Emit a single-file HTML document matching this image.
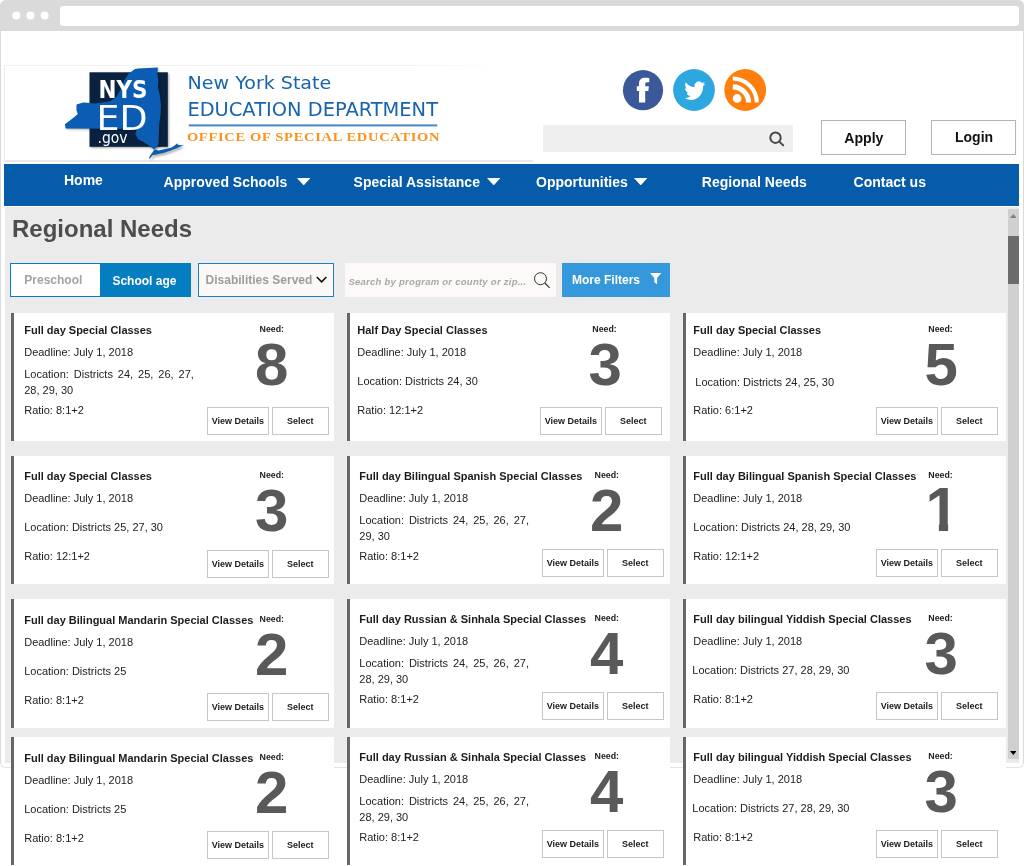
<!DOCTYPE html>
<html lang="en">
<head>
<meta charset="utf-8">
<title>Regional Needs - NYSED Office of Special Education</title>
<style>
html,body{margin:0;padding:0;background:#fff;}
body{width:1024px;height:866px;position:relative;overflow:hidden;font-family:"Liberation Sans",Arial,Helvetica,sans-serif;}
div,span,svg{position:absolute;white-space:nowrap;}
.wrap{left:0;top:0;width:1024px;height:866px;will-change:transform;}
.frame{left:0;top:0;width:1022px;height:766.5px;border:1px solid #dadada;border-bottom-color:#e2e2e2;border-top:0;border-radius:6px;background:#fff;}
.chrome{left:0;top:0;width:1024px;height:30.6px;background:#dadada;border-radius:6px 6px 0 0;}
.dot{width:8px;height:8px;border-radius:50%;background:#fff;top:11.4px;}
.url{left:59.5px;top:5.6px;width:959.3px;height:20.3px;background:#fff;border-radius:3px;}
.nav{left:4.1px;top:163.7px;width:1014.9px;height:42.1px;background:#065bab;}
.page{left:5px;top:207.2px;width:1014px;height:555.5px;background:#ebebeb;}
.card{background:#fff;border-left:3px solid #666;box-sizing:border-box;height:128px;}
.btn{border:1px solid #c6c6c6;box-sizing:border-box;background:#fff;height:28px;}
.hb{border:1px solid #b9b1b3;box-sizing:border-box;background:#fff;}
</style>
</head>
<body>
<div class="wrap">

<div class="frame"></div>
<div class="chrome"></div>
<svg style="left:0;top:0" width="60" height="31" viewBox="0 0 60 31"><circle cx="16.25" cy="15.4" r="4" fill="#fff"/><circle cx="30.4" cy="15.4" r="4" fill="#fff"/><circle cx="44.6" cy="15.4" r="4" fill="#fff"/></svg>
<div class="url"></div>
<div style="left:4px;top:65px;width:529px;height:97px;border-left:1px solid #eee;border-bottom:2px solid #e8e8e8;box-sizing:border-box;background:#fff"></div>
<div style="left:4px;top:65px;width:500px;height:1px;background:linear-gradient(90deg,#f2f2f2 0,#f2f2f2 80%,#fff 100%)"></div>
<svg style="left:0;top:0" width="540" height="165" viewBox="0 0 540 165">
<defs><filter id="sh" x="-10%" y="-10%" width="130%" height="130%"><feGaussianBlur stdDeviation="1.1"/></filter></defs>
<rect x="90.6" y="73.4" width="78.3" height="74.5" fill="#000" opacity=".35" filter="url(#sh)"/>
<rect x="89.5" y="72.3" width="78.3" height="74.5" fill="#0a2240"/>
<polygon points="135.7,70.5 139.1,69.7 159.0,68.8 158.5,74.9 159.6,83.1 159.0,88.6 161.0,96.8 162.1,106.3 161.7,115.9 160.3,125.5 159.9,137.8 159.6,146.0 157.6,148.7 154.9,150.8 152.8,148.7 144.6,143.3 139.1,140.5 136.4,135.1 137.8,131.0 133.7,130.3 66.7,129.6 66.0,125.5 74.9,118.7 79.0,115.2 77.6,111.8 77.6,105.7 84.4,103.6 96.7,104.7 111.8,102.2 117.3,98.1 121.4,91.3 125.5,81.7 129.6,74.9" fill="#000" opacity=".3" filter="url(#sh)"/>
<polygon points="134.6,69.3 138.0,68.5 157.9,67.5 157.4,73.7 158.5,81.9 157.9,87.3 159.9,95.5 161.0,105.1 160.6,114.7 159.2,124.3 158.8,136.6 158.5,144.8 156.5,147.5 153.8,149.6 151.7,147.5 143.5,142.0 138.0,139.3 135.3,133.8 136.7,129.7 132.6,129.0 65.6,128.4 64.9,124.3 73.8,117.4 77.9,114.0 76.5,110.6 76.5,104.4 83.3,102.4 95.6,103.5 110.7,101.0 116.2,96.9 120.3,90.1 124.4,80.5 128.5,73.7" fill="#0b5cb3"/>
<polygon points="150.3,160.2 152.0,157.1 154.1,154.3 156.1,151.2 160.2,152.4 167.0,151.0 172.5,149.8 175.9,147.7 178.7,145.3 179.3,146.8 182.1,147.3 185.5,146.8 182.1,148.5 178.0,150.2 172.5,152.6 165.7,154.8 158.8,156.3 154.1,157.2 151.3,160.5" fill="#000" opacity=".3" filter="url(#sh)"/>
<polygon points="148.8,158.2 150.5,155.1 152.6,152.3 154.6,149.2 158.7,150.4 165.5,149.0 171.0,147.8 174.4,145.7 177.2,143.3 177.8,144.8 180.6,145.3 184.0,144.8 180.6,146.5 176.5,148.2 171.0,150.6 164.2,152.8 157.3,154.3 152.6,155.2 149.8,158.5" fill="#0b5cb3"/>
<text x="98.6" y="97.6" font-family='"DejaVu Sans", "Liberation Sans", sans-serif' font-weight="700" font-size="25.4" fill="#fff" textLength="49" lengthAdjust="spacingAndGlyphs">NYS</text>
<text x="96.6" y="129.8" font-family='"DejaVu Sans", "Liberation Sans", sans-serif' font-weight="400" font-size="33" fill="#fff" textLength="51" lengthAdjust="spacingAndGlyphs">ED</text>
<text x="97.6" y="142.8" font-family='"DejaVu Sans", "Liberation Sans", sans-serif' font-weight="400" font-size="15" fill="#fff" textLength="30" lengthAdjust="spacingAndGlyphs">.gov</text>
<text x="187.6" y="88.5" font-family='"DejaVu Sans", "Liberation Sans", sans-serif' font-size="18.1" fill="#1763ae" textLength="143.6" lengthAdjust="spacingAndGlyphs">New York State</text>
<text x="187.4" y="116.2" font-family='"DejaVu Sans", "Liberation Sans", sans-serif' font-size="19.2" fill="#1763ae" textLength="250.6" lengthAdjust="spacingAndGlyphs">EDUCATION DEPARTMENT</text>
<rect x="188.7" y="124.4" width="248.5" height="2" fill="#4587c9"/>
<text x="0" y="0" font-family='"Liberation Serif", "Times New Roman", serif' font-weight="700" font-size="13.2" fill="#f7941d" letter-spacing="0.62" transform="translate(186.9 140.8) scale(1.1 1)" >OFFICE OF SPECIAL EDUCATION</text>
</svg>
<svg style="left:620px;top:66px" width="150" height="48" viewBox="620 66 150 48">
<circle cx="643" cy="90.2" r="20.1" fill="#3b5998"/>
<path d="M639 102.600V90.900H636.800V86.200H639V83.500C639 79.500 641.500 77.700 645 77.700C646.800 77.700 648.300 77.900 649.300 78.100V82.200H647.200C645.600 82.200 645.200 82.900 645.200 84.200V86.200H648.900L648.300 90.900H645.200V102.600Z" fill="#fff"/>
<circle cx="694" cy="90" r="20.9" fill="#2ca7e0"/>
<path transform="translate(684.3 79.300) scale(0.875 0.950)" d="M23.950 4.570a10 10 0 0 1-2.820.770 4.960 4.960 0 0 0 2.160-2.720c-.950.560-2 .960-3.130 1.190a4.920 4.920 0 0 0-8.380 4.480C7.690 8.100 4.070 6.130 1.640 3.160a4.820 4.820 0 0 0-.670 2.480c0 1.710.870 3.210 2.190 4.100a4.900 4.900 0 0 1-2.230-.620v.060a4.920 4.920 0 0 0 3.950 4.830 5 5 0 0 1-2.210.080 4.940 4.940 0 0 0 4.600 3.420A9.870 9.870 0 0 1 0 19.540a13.940 13.940 0 0 0 7.550 2.210c9.050 0 14-7.500 14-13.980 0-.210 0-.420-.020-.630A9.940 9.940 0 0 0 24 4.590z" fill="#fff"/>
<circle cx="745.2" cy="90" r="20.9" fill="#ff7f0e"/>
<circle cx="737.1" cy="98.500" r="4.400" fill="#fff"/>
<path d="M732.8 84.300a18.300 18.300 0 0 1 18.300 18.300h-5.100a13.200 13.200 0 0 0-13.200-13.200z" fill="#fff"/>
<path d="M732.8 76.500a26.100 26.100 0 0 1 26.100 26.100h-4.100a22 22 0 0 0-22-22z" fill="#fff"/>
</svg>
<div style="left:543px;top:124.9px;width:249.6px;height:26.8px;background:#efefef"></div>
<svg style="left:766px;top:128px" width="22" height="22" viewBox="766 128 22 22"><circle cx="775.500" cy="137.700" r="5.200" fill="none" stroke="#474747" stroke-width="2"/><path d="M779.300 141.600l3.900 3.800" stroke="#474747" stroke-width="2" stroke-linecap="round"/></svg>
<div class="hb" style="left:821px;top:120px;width:85px;height:35px"></div>
<div style="left:844.3px;top:130px;font-size:14.1px;line-height:16px;font-weight:700;color:#111;">Apply</div>
<div class="hb" style="left:931px;top:120px;width:85px;height:35px"></div>
<div style="left:955.0px;top:129px;font-size:14.0px;line-height:16px;font-weight:700;color:#111;">Login</div>
<div class="nav"></div>
<div style="left:64.0px;top:172px;font-size:14px;line-height:16px;font-weight:700;color:#fff;">Home</div>
<div style="left:163.6px;top:174px;font-size:14px;line-height:16px;font-weight:700;color:#fff;">Approved Schools</div>
<div style="left:353.6px;top:174px;font-size:14px;line-height:16px;font-weight:700;color:#fff;">Special Assistance</div>
<div style="left:536.0px;top:174px;font-size:14px;line-height:16px;font-weight:700;color:#fff;">Opportunities</div>
<div style="left:701.8px;top:174px;font-size:14px;line-height:16px;font-weight:700;color:#fff;">Regional Needs</div>
<div style="left:853.6px;top:174px;font-size:14px;line-height:16px;font-weight:700;color:#fff;">Contact us</div>
<svg style="left:297.0px;top:177.6px" width="13.4" height="7.4" viewBox="0 0 13.4 7.4"><path d="M0 0h13.400l-6.700 7.400z" fill="#fff"/></svg>
<svg style="left:486.7px;top:177.6px" width="13.4" height="7.4" viewBox="0 0 13.4 7.4"><path d="M0 0h13.400l-6.700 7.400z" fill="#fff"/></svg>
<svg style="left:634.4px;top:177.6px" width="13.4" height="7.4" viewBox="0 0 13.4 7.4"><path d="M0 0h13.400l-6.700 7.400z" fill="#fff"/></svg>
<div class="page"></div>
<div style="left:1008px;top:209px;width:11px;height:549.8px;background:#d0d0d0"></div>
<div style="left:1008px;top:236px;width:11px;height:47.7px;background:#6b6b6b"></div>
<svg style="left:1009.6px;top:214.2px" width="6.6" height="4" viewBox="0 0 6.6 4"><path d="M0 4l3.300-4 3.300 4z" fill="#808080"/></svg>
<svg style="left:1009.6px;top:750.7px" width="6.6" height="4" viewBox="0 0 6.6 4"><path d="M0 0h6.600l-3.300 4z" fill="#000"/></svg>
<div style="left:12.0px;top:215px;font-size:24px;line-height:27px;font-weight:700;color:#4d4d4d;">Regional Needs</div>
<div style="left:10px;top:263.1px;width:181px;height:33.5px;box-sizing:border-box;border:1px solid #057dc1;background:#fff"></div>
<div style="left:100px;top:263.1px;width:91px;height:33.5px;background:#057dc1"></div>
<div style="left:24.3px;top:273px;font-size:12px;line-height:14px;font-weight:700;color:#a3a3a3;">Preschool</div>
<div style="left:112.4px;top:274px;font-size:12px;line-height:14px;font-weight:700;color:#fff;">School age</div>
<div style="left:198.2px;top:263.1px;width:135.5px;height:33.5px;box-sizing:border-box;border:1px solid #1a80c3;background:#fcf8f7"></div>
<div style="left:205.6px;top:273px;font-size:12px;line-height:14px;font-weight:700;color:#9d9d9d;">Disabilities Served</div>
<svg style="left:314.4px;top:275.4px" width="15" height="10" viewBox="0 0 15 10"><path d="M2.800 2l4.800 4.900 4.800-4.900" fill="none" stroke="#111" stroke-width="1.600"/></svg>
<div style="left:344.6px;top:262.5px;width:211.5px;height:34.2px;background:#fcf9f8"></div>
<div style="left:348.4px;top:276px;font-size:9.5px;line-height:11px;font-weight:700;color:#a8a8a8;font-style:italic;letter-spacing:0.26px;">Search by program or county or zip...</div>
<svg style="left:532px;top:270px" width="20" height="20" viewBox="532 270 20 20"><circle cx="540.5" cy="278.700" r="6" fill="none" stroke="#333" stroke-width="1"/><path d="M544.8 283l4.800 4.800" stroke="#333" stroke-width="1.200"/></svg>
<div style="left:561.9px;top:262.5px;width:108px;height:34.2px;background:#3498db"></div>
<div style="left:572.0px;top:273px;font-size:12px;line-height:14px;font-weight:700;color:#fff;">More Filters</div>
<svg style="left:650.1px;top:273.4px" width="11.4" height="11.4" viewBox="0 0 11.4 11.4"><path d="M0 0h11.400l-4.300 5v6.200l-2.800-2v-4.200z" fill="#fff"/></svg>
<div class="card" style="left:11px;top:313px;width:323px"></div>
<div style="left:24.2px;top:324px;font-size:11px;line-height:12px;font-weight:700;color:#1c1c1c;">Full day Special Classes</div>
<div style="left:24.2px;top:346px;font-size:11px;line-height:12px;color:#222;">Deadline: July 1, 2018</div>
<div style="left:24.2px;top:368px;font-size:11px;line-height:12px;color:#222;width:169.7px;text-align:justify;text-align-last:justify;white-space:normal;">Location: Districts 24, 25, 26, 27,</div>
<div style="left:24.2px;top:384px;font-size:11px;line-height:12px;color:#222;">28, 29, 30</div>
<div style="left:24.2px;top:404px;font-size:11px;line-height:12px;color:#222;">Ratio: 8:1+2</div>
<div style="left:259.6px;top:324px;font-size:8.8px;line-height:10px;font-weight:700;color:#222;">Need:</div>
<div style="left:255.0px;top:331px;font-size:60px;line-height:67px;font-weight:700;color:#595959;">8</div>
<div class="btn" style="left:207px;top:407px;width:62px"></div>
<div style="left:211.7px;top:416px;font-size:9px;line-height:10px;font-weight:700;color:#1c1c1c;">View Details</div>
<div class="btn" style="left:272px;top:407px;width:57px"></div>
<div style="left:287.1px;top:416px;font-size:9px;line-height:10px;font-weight:700;color:#1c1c1c;">Select</div>
<div class="card" style="left:347px;top:313px;width:323px"></div>
<div style="left:357.3px;top:324px;font-size:11px;line-height:12px;font-weight:700;color:#1c1c1c;">Half Day Special Classes</div>
<div style="left:357.3px;top:346px;font-size:11px;line-height:12px;color:#222;">Deadline: July 1, 2018</div>
<div style="left:357.3px;top:375px;font-size:11px;line-height:12px;color:#222;">Location: Districts 24, 30</div>
<div style="left:357.3px;top:404px;font-size:11px;line-height:12px;color:#222;">Ratio: 12:1+2</div>
<div style="left:592.3px;top:324px;font-size:8.8px;line-height:10px;font-weight:700;color:#222;">Need:</div>
<div style="left:588.4px;top:331px;font-size:60px;line-height:67px;font-weight:700;color:#595959;">3</div>
<div class="btn" style="left:540px;top:407px;width:62px"></div>
<div style="left:544.7px;top:416px;font-size:9px;line-height:10px;font-weight:700;color:#1c1c1c;">View Details</div>
<div class="btn" style="left:605px;top:407px;width:57px"></div>
<div style="left:620.1px;top:416px;font-size:9px;line-height:10px;font-weight:700;color:#1c1c1c;">Select</div>
<div class="card" style="left:683px;top:313px;width:323px"></div>
<div style="left:693.3px;top:324px;font-size:11px;line-height:12px;font-weight:700;color:#1c1c1c;">Full day Special Classes</div>
<div style="left:693.3px;top:346px;font-size:11px;line-height:12px;color:#222;">Deadline: July 1, 2018</div>
<div style="left:695.3px;top:376px;font-size:11px;line-height:12px;color:#222;">Location: Districts 24, 25, 30</div>
<div style="left:693.3px;top:404px;font-size:11px;line-height:12px;color:#222;">Ratio: 6:1+2</div>
<div style="left:928.3px;top:324px;font-size:8.8px;line-height:10px;font-weight:700;color:#222;">Need:</div>
<div style="left:924.5px;top:331px;font-size:60px;line-height:67px;font-weight:700;color:#595959;">5</div>
<div class="btn" style="left:876px;top:407px;width:62px"></div>
<div style="left:880.7px;top:416px;font-size:9px;line-height:10px;font-weight:700;color:#1c1c1c;">View Details</div>
<div class="btn" style="left:941px;top:407px;width:57px"></div>
<div style="left:956.1px;top:416px;font-size:9px;line-height:10px;font-weight:700;color:#1c1c1c;">Select</div>
<div class="card" style="left:11px;top:456px;width:323px"></div>
<div style="left:24.2px;top:470px;font-size:11px;line-height:12px;font-weight:700;color:#1c1c1c;">Full day Special Classes</div>
<div style="left:24.2px;top:492px;font-size:11px;line-height:12px;color:#222;">Deadline: July 1, 2018</div>
<div style="left:24.2px;top:521px;font-size:11px;line-height:12px;color:#222;">Location: Districts 25, 27, 30</div>
<div style="left:24.2px;top:550px;font-size:11px;line-height:12px;color:#222;">Ratio: 12:1+2</div>
<div style="left:259.6px;top:470px;font-size:8.8px;line-height:10px;font-weight:700;color:#222;">Need:</div>
<div style="left:255.0px;top:477px;font-size:60px;line-height:67px;font-weight:700;color:#595959;">3</div>
<div class="btn" style="left:207px;top:550px;width:62px"></div>
<div style="left:211.7px;top:559px;font-size:9px;line-height:10px;font-weight:700;color:#1c1c1c;">View Details</div>
<div class="btn" style="left:272px;top:550px;width:57px"></div>
<div style="left:287.1px;top:559px;font-size:9px;line-height:10px;font-weight:700;color:#1c1c1c;">Select</div>
<div class="card" style="left:347px;top:456px;width:323px"></div>
<div style="left:359.3px;top:470px;font-size:11px;line-height:12px;font-weight:700;color:#1c1c1c;">Full day Bilingual Spanish Special Classes</div>
<div style="left:359.3px;top:492px;font-size:11px;line-height:12px;color:#222;">Deadline: July 1, 2018</div>
<div style="left:359.3px;top:514px;font-size:11px;line-height:12px;color:#222;width:169.7px;text-align:justify;text-align-last:justify;white-space:normal;">Location: Districts 24, 25, 26, 27,</div>
<div style="left:359.3px;top:530px;font-size:11px;line-height:12px;color:#222;">29, 30</div>
<div style="left:359.3px;top:550px;font-size:11px;line-height:12px;color:#222;">Ratio: 8:1+2</div>
<div style="left:594.6px;top:470px;font-size:8.8px;line-height:10px;font-weight:700;color:#222;">Need:</div>
<div style="left:590.0px;top:477px;font-size:60px;line-height:67px;font-weight:700;color:#595959;">2</div>
<div class="btn" style="left:542px;top:549px;width:62px"></div>
<div style="left:546.7px;top:558px;font-size:9px;line-height:10px;font-weight:700;color:#1c1c1c;">View Details</div>
<div class="btn" style="left:607px;top:549px;width:57px"></div>
<div style="left:622.1px;top:558px;font-size:9px;line-height:10px;font-weight:700;color:#1c1c1c;">Select</div>
<div class="card" style="left:683px;top:456px;width:323px"></div>
<div style="left:693.3px;top:470px;font-size:11px;line-height:12px;font-weight:700;color:#1c1c1c;">Full day Bilingual Spanish Special Classes</div>
<div style="left:693.3px;top:492px;font-size:11px;line-height:12px;color:#222;">Deadline: July 1, 2018</div>
<div style="left:693.3px;top:521px;font-size:11px;line-height:12px;color:#222;">Location: Districts 24, 28, 29, 30</div>
<div style="left:693.3px;top:550px;font-size:11px;line-height:12px;color:#222;">Ratio: 12:1+2</div>
<div style="left:928.3px;top:470px;font-size:8.8px;line-height:10px;font-weight:700;color:#222;">Need:</div>
<div style="left:924.5px;top:477px;font-size:60px;line-height:67px;font-weight:700;color:#595959;transform-origin:0 54px;transform:scaleY(1.05);margin-left:0.9px;clip-path:polygon(0 0,40px 0,40px 46.4px,22.7px 46.4px,22.7px 60px,13.5px 60px,13.5px 46.4px,0 46.4px);">1</div>
<div class="btn" style="left:876px;top:549px;width:62px"></div>
<div style="left:880.7px;top:558px;font-size:9px;line-height:10px;font-weight:700;color:#1c1c1c;">View Details</div>
<div class="btn" style="left:941px;top:549px;width:57px"></div>
<div style="left:956.1px;top:558px;font-size:9px;line-height:10px;font-weight:700;color:#1c1c1c;">Select</div>
<div class="card" style="left:11px;top:599px;width:323px;height:129px"></div>
<div style="left:24.2px;top:614px;font-size:11px;line-height:12px;font-weight:700;color:#1c1c1c;">Full day Bilingual Mandarin Special Classes</div>
<div style="left:24.2px;top:636px;font-size:11px;line-height:12px;color:#222;">Deadline: July 1, 2018</div>
<div style="left:24.2px;top:665px;font-size:11px;line-height:12px;color:#222;">Location: Districts 25</div>
<div style="left:24.2px;top:694px;font-size:11px;line-height:12px;color:#222;">Ratio: 8:1+2</div>
<div style="left:259.6px;top:614px;font-size:8.8px;line-height:10px;font-weight:700;color:#222;">Need:</div>
<div style="left:255.0px;top:621px;font-size:60px;line-height:67px;font-weight:700;color:#595959;">2</div>
<div class="btn" style="left:207px;top:693px;width:62px"></div>
<div style="left:211.7px;top:702px;font-size:9px;line-height:10px;font-weight:700;color:#1c1c1c;">View Details</div>
<div class="btn" style="left:272px;top:693px;width:57px"></div>
<div style="left:287.1px;top:702px;font-size:9px;line-height:10px;font-weight:700;color:#1c1c1c;">Select</div>
<div class="card" style="left:347px;top:599px;width:323px;height:129px"></div>
<div style="left:359.3px;top:613px;font-size:11px;line-height:12px;font-weight:700;color:#1c1c1c;">Full day Russian &amp; Sinhala Special Classes</div>
<div style="left:359.3px;top:635px;font-size:11px;line-height:12px;color:#222;">Deadline: July 1, 2018</div>
<div style="left:359.3px;top:657px;font-size:11px;line-height:12px;color:#222;width:169.7px;text-align:justify;text-align-last:justify;white-space:normal;">Location: Districts 24, 25, 26, 27,</div>
<div style="left:359.3px;top:673px;font-size:11px;line-height:12px;color:#222;">28, 29, 30</div>
<div style="left:359.3px;top:693px;font-size:11px;line-height:12px;color:#222;">Ratio: 8:1+2</div>
<div style="left:594.6px;top:613px;font-size:8.8px;line-height:10px;font-weight:700;color:#222;">Need:</div>
<div style="left:590.0px;top:620px;font-size:60px;line-height:67px;font-weight:700;color:#595959;">4</div>
<div class="btn" style="left:542px;top:692px;width:62px"></div>
<div style="left:546.7px;top:701px;font-size:9px;line-height:10px;font-weight:700;color:#1c1c1c;">View Details</div>
<div class="btn" style="left:607px;top:692px;width:57px"></div>
<div style="left:622.1px;top:701px;font-size:9px;line-height:10px;font-weight:700;color:#1c1c1c;">Select</div>
<div class="card" style="left:683px;top:599px;width:323px;height:129px"></div>
<div style="left:693.3px;top:613px;font-size:11px;line-height:12px;font-weight:700;color:#1c1c1c;">Full day bilingual Yiddish Special Classes</div>
<div style="left:693.3px;top:635px;font-size:11px;line-height:12px;color:#222;">Deadline: July 1, 2018</div>
<div style="left:692.3px;top:664px;font-size:11px;line-height:12px;color:#222;">Location: Districts 27, 28, 29, 30</div>
<div style="left:693.3px;top:693px;font-size:11px;line-height:12px;color:#222;">Ratio: 8:1+2</div>
<div style="left:928.3px;top:613px;font-size:8.8px;line-height:10px;font-weight:700;color:#222;">Need:</div>
<div style="left:924.5px;top:620px;font-size:60px;line-height:67px;font-weight:700;color:#595959;">3</div>
<div class="btn" style="left:876px;top:692px;width:62px"></div>
<div style="left:880.7px;top:701px;font-size:9px;line-height:10px;font-weight:700;color:#1c1c1c;">View Details</div>
<div class="btn" style="left:941px;top:692px;width:57px"></div>
<div style="left:956.1px;top:701px;font-size:9px;line-height:10px;font-weight:700;color:#1c1c1c;">Select</div>
<div class="card" style="left:11px;top:737px;width:323px"></div>
<div style="left:24.2px;top:752px;font-size:11px;line-height:12px;font-weight:700;color:#1c1c1c;">Full day Bilingual Mandarin Special Classes</div>
<div style="left:24.2px;top:774px;font-size:11px;line-height:12px;color:#222;">Deadline: July 1, 2018</div>
<div style="left:24.2px;top:803px;font-size:11px;line-height:12px;color:#222;">Location: Districts 25</div>
<div style="left:24.2px;top:832px;font-size:11px;line-height:12px;color:#222;">Ratio: 8:1+2</div>
<div style="left:259.6px;top:752px;font-size:8.8px;line-height:10px;font-weight:700;color:#222;">Need:</div>
<div style="left:255.0px;top:759px;font-size:60px;line-height:67px;font-weight:700;color:#595959;">2</div>
<div class="btn" style="left:207px;top:831px;width:62px"></div>
<div style="left:211.7px;top:840px;font-size:9px;line-height:10px;font-weight:700;color:#1c1c1c;">View Details</div>
<div class="btn" style="left:272px;top:831px;width:57px"></div>
<div style="left:287.1px;top:840px;font-size:9px;line-height:10px;font-weight:700;color:#1c1c1c;">Select</div>
<div class="card" style="left:347px;top:737px;width:323px"></div>
<div style="left:359.3px;top:751px;font-size:11px;line-height:12px;font-weight:700;color:#1c1c1c;">Full day Russian &amp; Sinhala Special Classes</div>
<div style="left:359.3px;top:773px;font-size:11px;line-height:12px;color:#222;">Deadline: July 1, 2018</div>
<div style="left:359.3px;top:795px;font-size:11px;line-height:12px;color:#222;width:169.7px;text-align:justify;text-align-last:justify;white-space:normal;">Location: Districts 24, 25, 26, 27,</div>
<div style="left:359.3px;top:811px;font-size:11px;line-height:12px;color:#222;">28, 29, 30</div>
<div style="left:359.3px;top:831px;font-size:11px;line-height:12px;color:#222;">Ratio: 8:1+2</div>
<div style="left:594.6px;top:751px;font-size:8.8px;line-height:10px;font-weight:700;color:#222;">Need:</div>
<div style="left:590.0px;top:758px;font-size:60px;line-height:67px;font-weight:700;color:#595959;">4</div>
<div class="btn" style="left:542px;top:830px;width:62px"></div>
<div style="left:546.7px;top:839px;font-size:9px;line-height:10px;font-weight:700;color:#1c1c1c;">View Details</div>
<div class="btn" style="left:607px;top:830px;width:57px"></div>
<div style="left:622.1px;top:839px;font-size:9px;line-height:10px;font-weight:700;color:#1c1c1c;">Select</div>
<div class="card" style="left:683px;top:737px;width:323px"></div>
<div style="left:693.3px;top:751px;font-size:11px;line-height:12px;font-weight:700;color:#1c1c1c;">Full day bilingual Yiddish Special Classes</div>
<div style="left:693.3px;top:773px;font-size:11px;line-height:12px;color:#222;">Deadline: July 1, 2018</div>
<div style="left:692.3px;top:802px;font-size:11px;line-height:12px;color:#222;">Location: Districts 27, 28, 29, 30</div>
<div style="left:693.3px;top:831px;font-size:11px;line-height:12px;color:#222;">Ratio: 8:1+2</div>
<div style="left:928.3px;top:751px;font-size:8.8px;line-height:10px;font-weight:700;color:#222;">Need:</div>
<div style="left:924.5px;top:758px;font-size:60px;line-height:67px;font-weight:700;color:#595959;">3</div>
<div class="btn" style="left:876px;top:830px;width:62px"></div>
<div style="left:880.7px;top:839px;font-size:9px;line-height:10px;font-weight:700;color:#1c1c1c;">View Details</div>
<div class="btn" style="left:941px;top:830px;width:57px"></div>
<div style="left:956.1px;top:839px;font-size:9px;line-height:10px;font-weight:700;color:#1c1c1c;">Select</div>
</div>
</body>
</html>
